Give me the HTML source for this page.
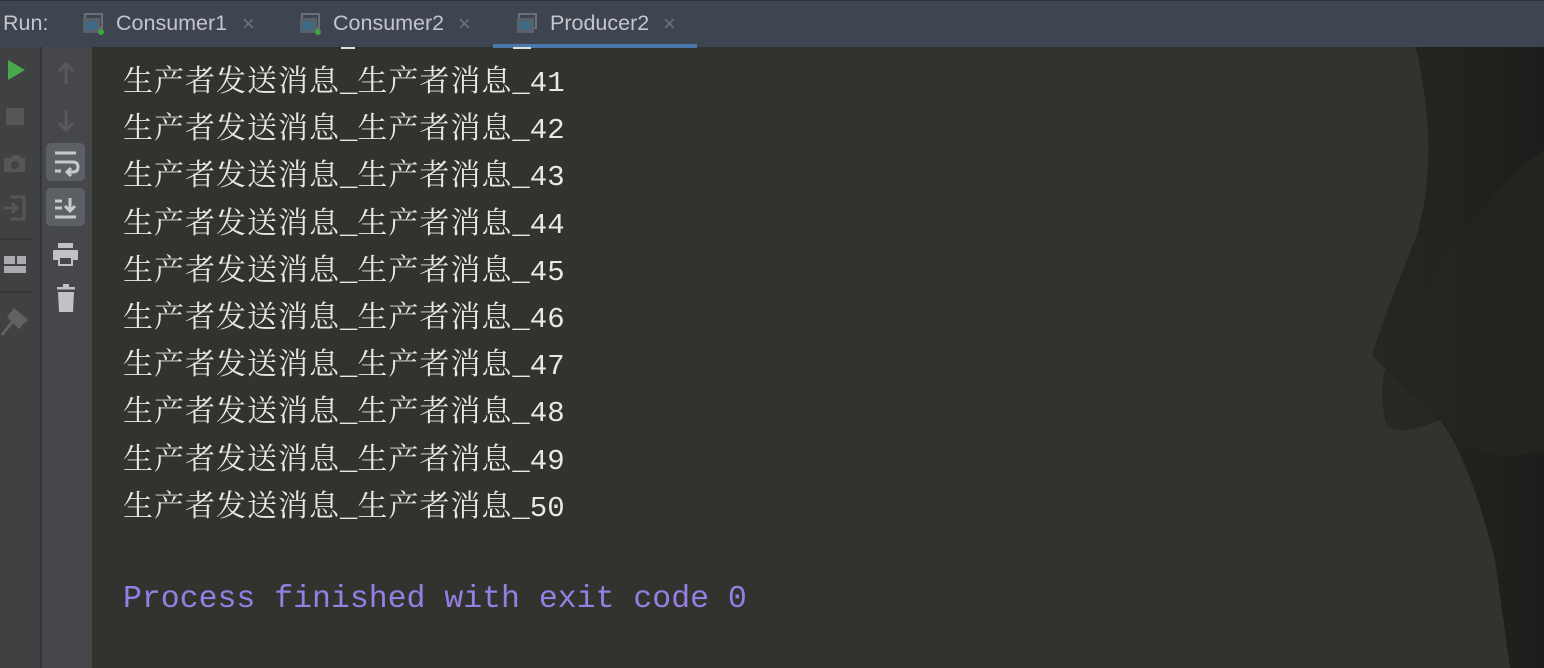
<!DOCTYPE html>
<html><head><meta charset="utf-8"><style>
*{margin:0;padding:0;box-sizing:border-box}
body{width:1544px;height:668px;overflow:hidden;background:#32332e;position:relative;font-family:"Liberation Sans",sans-serif}
.tabs{position:absolute;left:0;top:0;width:1544px;height:47px;background:#3e4450;border-top:1px solid #2e3136}
.tabs span{position:absolute;top:10px;font-size:21.5px;color:#c3c6ca}
.x{color:#6d727a!important;font-size:22px!important}
.ico{position:absolute;top:12px;width:22px;height:22px}
.sel{position:absolute;left:493px;top:43px;width:204px;height:4px;background:#4a78aa}
.c1{position:absolute;left:0;top:47px;width:40px;height:621px;background:#404143}
.c2{position:absolute;left:41px;top:47px;width:51px;height:621px;background:#46474a;border-left:1px solid #37383a}
.lines{position:absolute;left:123px;top:55px;color:#e8e8e4}
.l{height:47.2px;line-height:47px;white-space:nowrap}
.cj{font-family:"Noto Serif CJK SC","Liberation Serif",serif;font-size:30px;letter-spacing:1px}
.m{font-family:"Liberation Mono",monospace;font-size:29px}
.p{position:absolute;left:123px;top:582px;font-family:"Liberation Mono",monospace;font-size:31.5px;color:#957fe4;white-space:pre}
</style></head><body>
<svg style="position:absolute;left:0;top:0" width="1544" height="668">
<defs><linearGradient id="g" x1="0" x2="1"><stop offset="0" stop-color="#262723"/><stop offset="1" stop-color="#1d1e1b"/></linearGradient></defs>
<path d="M1415 47 L1544 47 L1544 668 L1510 668 L1495 560 Q1470 460 1440 420 Q1395 380 1372 355 Q1390 300 1415 240 Q1435 180 1425 100 Q1420 60 1415 47Z" fill="url(#g)"/>
<path d="M1440 420 Q1390 440 1385 420 Q1375 370 1400 340 Q1420 300 1440 260 Q1500 180 1544 150 L1544 450 Q1480 470 1440 420Z" fill="#242521" opacity=".8"/>
</svg>
<div class="tabs">
<span style="left:3px">Run:</span>
<svg class="ico" style="left:82px" viewBox="0 0 22 22"><rect x="3" y="1" width="17" height="14" fill="none" stroke="#6a7078" stroke-width="2"/><rect x="1" y="5" width="17" height="15" fill="#5b6068"/><rect x="3" y="8" width="12" height="9" fill="#3f6a84"/><circle cx="19" cy="19" r="3" fill="#3fa63f"/></svg>
<span style="left:116px">Consumer1</span><span class="x" style="left:242px">×</span>
<svg class="ico" style="left:299px" viewBox="0 0 22 22"><rect x="3" y="1" width="17" height="14" fill="none" stroke="#6a7078" stroke-width="2"/><rect x="1" y="5" width="17" height="15" fill="#5b6068"/><rect x="3" y="8" width="12" height="9" fill="#3f6a84"/><circle cx="19" cy="19" r="3" fill="#3fa63f"/></svg>
<span style="left:333px">Consumer2</span><span class="x" style="left:458px">×</span>
<svg class="ico" style="left:516px" viewBox="0 0 22 22"><rect x="3" y="1" width="17" height="14" fill="none" stroke="#6a7078" stroke-width="2"/><rect x="1" y="5" width="17" height="15" fill="#5b6068"/><rect x="3" y="8" width="12" height="9" fill="#3f6a84"/></svg>
<span style="left:550px">Producer2</span><span class="x" style="left:663px">×</span>
<div class="sel"></div>
</div>
<div class="c1"></div><div class="c2"></div>
<svg style="position:absolute;left:0;top:47px" width="92" height="300">
<path d="M8 13 L25 23 L8 33Z" fill="#49a74c"/>
<rect x="6" y="61" width="18" height="17" fill="#555658"/>
<path d="M4 111 h7 l2-3 h6 l2 3 h4 v14 h-21z" fill="#555658"/><circle cx="15" cy="118" r="4" fill="#404143"/>
<path d="M10 150 h14 v22 h-14 M3 161 h14 M12 156 l5 5 -5 5" fill="none" stroke="#555658" stroke-width="3"/>
<rect x="0" y="191" width="32" height="2" fill="#37383a"/>
<rect x="4" y="209" width="11" height="8" fill="#a9abae"/><rect x="17" y="209" width="9" height="8" fill="#a9abae"/><rect x="4" y="219" width="22" height="7" fill="#a9abae"/>
<rect x="0" y="244" width="32" height="2" fill="#37383a"/>
<path d="M14 263 l12 10 -4 3 -3 4 -10-10z M12 275 l-10 13" fill="#606163" stroke="#606163" stroke-width="3"/>
<path d="M66 17 v20 M59 24 l7-7 7 7" fill="none" stroke="#58595c" stroke-width="3"/>
<path d="M66 63 v20 M59 76 l7 7 7-7" fill="none" stroke="#58595c" stroke-width="3"/>
<rect x="46" y="96" width="39" height="38" rx="5" fill="#5c5f63"/>
<path d="M55 106 h21 M55 115 h18 q5 0 5 5 q0 5-5 5 h-5 M71 121 l-4 4 4 4 M55 124 h6" fill="none" stroke="#c7c9cc" stroke-width="3"/>
<rect x="46" y="141" width="39" height="38" rx="5" fill="#5c5f63"/>
<path d="M55 154 h7 M55 161 h7 M55 170 h21 M70 151 v13 M65 159 l5 5 5-5" fill="none" stroke="#c7c9cc" stroke-width="3"/>
<rect x="58" y="196" width="15" height="5" fill="#c0c2c5"/><rect x="53" y="203" width="25" height="10" rx="1" fill="#c0c2c5"/><rect x="59" y="210" width="13" height="8" fill="#46474a" stroke="#c0c2c5" stroke-width="2"/>
<rect x="57" y="240" width="18" height="2.5" fill="#c0c2c5"/><rect x="63" y="237" width="6" height="3" fill="#c0c2c5"/><path d="M58 245 h16 l-1 20 h-14z" fill="#c0c2c5"/>
</svg>
<div style="position:absolute;left:341px;top:47px;width:14px;height:2px;background:#ddd"></div>
<div style="position:absolute;left:513px;top:47px;width:18px;height:2px;background:#ddd"></div>
<div class="lines">
<div class="l"><span class="cj">生产者发送消息</span><span class="m">_</span><span class="cj">生产者消息</span><span class="m">_41</span></div>
<div class="l"><span class="cj">生产者发送消息</span><span class="m">_</span><span class="cj">生产者消息</span><span class="m">_42</span></div>
<div class="l"><span class="cj">生产者发送消息</span><span class="m">_</span><span class="cj">生产者消息</span><span class="m">_43</span></div>
<div class="l"><span class="cj">生产者发送消息</span><span class="m">_</span><span class="cj">生产者消息</span><span class="m">_44</span></div>
<div class="l"><span class="cj">生产者发送消息</span><span class="m">_</span><span class="cj">生产者消息</span><span class="m">_45</span></div>
<div class="l"><span class="cj">生产者发送消息</span><span class="m">_</span><span class="cj">生产者消息</span><span class="m">_46</span></div>
<div class="l"><span class="cj">生产者发送消息</span><span class="m">_</span><span class="cj">生产者消息</span><span class="m">_47</span></div>
<div class="l"><span class="cj">生产者发送消息</span><span class="m">_</span><span class="cj">生产者消息</span><span class="m">_48</span></div>
<div class="l"><span class="cj">生产者发送消息</span><span class="m">_</span><span class="cj">生产者消息</span><span class="m">_49</span></div>
<div class="l"><span class="cj">生产者发送消息</span><span class="m">_</span><span class="cj">生产者消息</span><span class="m">_50</span></div>
</div>
<div class="p">Process finished with exit code 0</div>
</body></html>
